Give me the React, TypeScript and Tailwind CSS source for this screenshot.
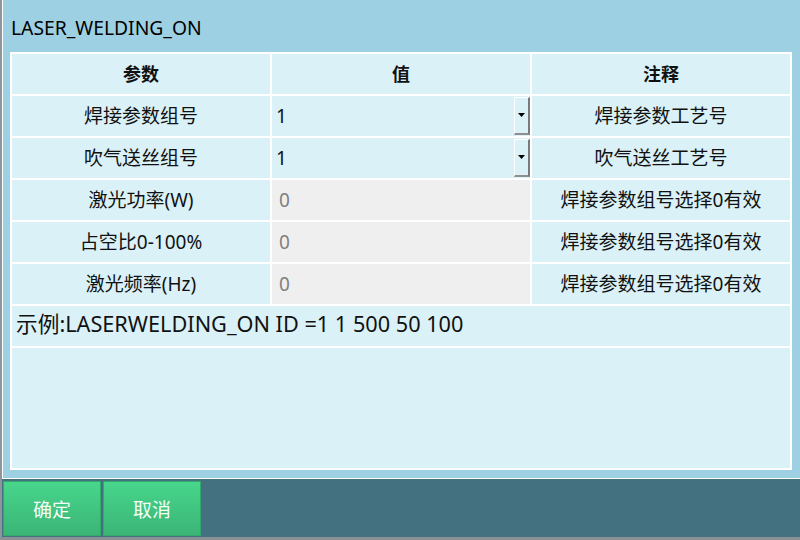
import React from 'react';

type Row = {
  name: string;
  value: string;
  note: string;
  kind: 'select' | 'disabled';
};

const rows: Row[] = [
  { name: '焊接参数组号', value: '1', note: '焊接参数工艺号', kind: 'select' },
  { name: '吹气送丝组号', value: '1', note: '吹气送丝工艺号', kind: 'select' },
  { name: '激光功率(W)', value: '0', note: '焊接参数组号选择0有效', kind: 'disabled' },
  { name: '占空比0-100%', value: '0', note: '焊接参数组号选择0有效', kind: 'disabled' },
  { name: '激光频率(Hz)', value: '0', note: '焊接参数组号选择0有效', kind: 'disabled' },
];

const font = { fontFamily: '"Noto Sans", "Noto Sans CJK SC", sans-serif' };

const DropButton = () => (
  <div className="w-[16px] h-full flex items-center justify-center border-t border-l border-white border-r-2 border-b-2 border-r-[#7a7a7a] border-b-[#8f8f8f] bg-[#daf1f7]">
    <svg width="8" height="5" viewBox="0 0 8 5">
      <path d="M0 0h7L3.5 4z" fill="#000" />
    </svg>
  </div>
);

export default function App() {
  return (
    <div className="w-[800px] h-[540px] flex flex-col bg-[#8a9298] overflow-hidden" style={font}>
      <div className="flex h-[537px]">
        <div className="w-[2px] bg-[#8c969c]" />
        <div className="flex-1 flex flex-col">
          {/* dialog */}
          <div className="h-[479px] bg-[#9dd0e2] border-l border-b border-white flex flex-col">
            <div className="h-[52px] flex items-center pl-[8px] pt-[4px] text-[19.3px] text-black">
              LASER_WELDING_ON
            </div>
            <div className="ml-[7px] mr-[8px] h-[418px] border-2 border-white bg-white grid grid-cols-3 gap-[2px] grid-rows-[40px_40px_40px_40px_40px_40px_40px_1fr] text-[19px] text-[#111]">
              <div className="bg-[#daf1f7] flex items-center justify-center font-bold text-[18px]">参数</div>
              <div className="bg-[#daf1f7] flex items-center justify-center font-bold text-[18px]">值</div>
              <div className="bg-[#daf1f7] flex items-center justify-center font-bold text-[18px]">注释</div>
              {rows.map(r => (
                <React.Fragment key={r.name}>
                  <div className="bg-[#daf1f7] flex items-center justify-center">{r.name}</div>
                  {r.kind === 'select' ? (
                    <div className="bg-[#daf1f7] flex items-center justify-between pl-[4px] py-[1px]">
                      <span>{r.value}</span>
                      <DropButton />
                    </div>
                  ) : (
                    <div className="bg-[#efefef] flex items-center pl-[7px] text-[#808080]">{r.value}</div>
                  )}
                  <div className="bg-[#daf1f7] flex items-center justify-center">{r.note}</div>
                </React.Fragment>
              ))}
              <div className="col-span-3 bg-[#daf1f7] flex items-center pl-[4px] pb-[3px] text-[21.7px]">
                示例:LASERWELDING_ON ID =1 1 500 50 100
              </div>
              <div className="col-span-3 bg-[#daf1f7]" />
            </div>
          </div>
          {/* footer */}
          <div className="flex-1 bg-[#44717f] flex gap-[2px] pl-[1px] pt-[2px] pb-[1px]">
            {['确定', '取消'].map(t => (
              <button
                key={t}
                className="w-[98px] h-full flex items-center justify-center pt-[3px] text-[19px] text-[#f4fff8] border border-[#34a96c] bg-gradient-to-b from-[#47d68b] to-[#3bb577]"
              >
                {t}
              </button>
            ))}
          </div>
        </div>
      </div>
      <div className="h-[3px] bg-[#8a9298]" />
    </div>
  );
}
